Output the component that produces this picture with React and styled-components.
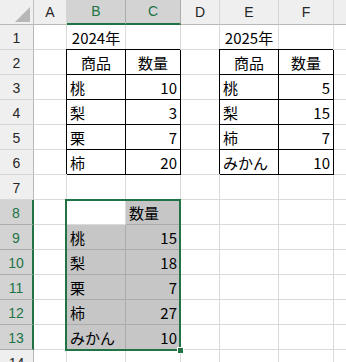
import React from "react";
import styled, { createGlobalStyle } from "styled-components";

const GlobalStyle = createGlobalStyle`
  html, body {
    margin: 0;
    padding: 0;
    background: #ffffff;
  }
  body {
    font-family: "Noto Sans CJK JP", "Noto Sans", sans-serif;
    overflow: hidden;
  }
`;

const GREEN = "#217346";

const COLUMNS = ["A", "B", "C", "D", "E", "F", "G"];
const ROW_COUNT = 14;

// cell contents keyed by address
const cells = {
  B1: { v: "2024年", align: "center" },
  B2: { v: "商品", align: "center" },
  C2: { v: "数量", align: "center" },
  B3: { v: "桃" },
  C3: { v: "10", align: "right" },
  B4: { v: "梨" },
  C4: { v: "3", align: "right" },
  B5: { v: "栗" },
  C5: { v: "7", align: "right" },
  B6: { v: "柿" },
  C6: { v: "20", align: "right" },

  E1: { v: "2025年", align: "center" },
  E2: { v: "商品", align: "center" },
  F2: { v: "数量", align: "center" },
  E3: { v: "桃" },
  F3: { v: "5", align: "right" },
  E4: { v: "梨" },
  F4: { v: "15", align: "right" },
  E5: { v: "柿" },
  F5: { v: "7", align: "right" },
  E6: { v: "みかん" },
  F6: { v: "10", align: "right" },

  C8: { v: "数量" },
  B9: { v: "桃" },
  C9: { v: "15", align: "right" },
  B10: { v: "梨" },
  C10: { v: "18", align: "right" },
  B11: { v: "栗" },
  C11: { v: "7", align: "right" },
  B12: { v: "柿" },
  C12: { v: "27", align: "right" },
  B13: { v: "みかん" },
  C13: { v: "10", align: "right" },
};

const inRange = (col, row, c1, c2, r1, r2) =>
  col >= c1 && col <= c2 && row >= r1 && row <= r2;

const isBoxed = (col, row) =>
  inRange(col, row, "B", "C", 2, 6) || inRange(col, row, "E", "F", 2, 6);

const isSelected = (col, row) => inRange(col, row, "B", "C", 8, 13);

export default function App() {
  return (
    <>
      <GlobalStyle />
      <Viewport>
        <Sheet>
          <Corner>
            <CornerMark />
          </Corner>
          {COLUMNS.map((c) => (
            <ColHead key={c} $selected={c === "B" || c === "C"}>
              {/* G is only a sliver at the window edge */}
              {c === "G" ? "" : c}
            </ColHead>
          ))}

          {Array.from({ length: ROW_COUNT }, (_, i) => i + 1).map((row) => (
            <React.Fragment key={row}>
              <RowHead $selected={row >= 8 && row <= 13}>{row}</RowHead>
              {COLUMNS.map((col) => {
                const addr = col + row;
                const data = cells[addr];
                const selected = isSelected(col, row);
                return (
                  <Cell
                    key={addr}
                    $align={data?.align || "left"}
                    $boxed={isBoxed(col, row)}
                    $selected={selected && addr !== "B8"}
                  >
                    {data?.v}
                  </Cell>
                );
              })}
            </React.Fragment>
          ))}

          <Selection />
        </Sheet>
      </Viewport>
    </>
  );
}

const Viewport = styled.div`
  width: 346px;
  height: 362px;
  overflow: hidden;
  background: #ffffff;
`;

const Sheet = styled.div`
  position: relative;
  display: grid;
  grid-template-columns: 34px 33px 59px 55px 39px 59px 55px 60px;
  grid-template-rows: repeat(15, 25px);
  width: max-content;
`;

const Corner = styled.div`
  position: relative;
  background: #efefef;
  border-right: 1px solid #c2c2c2;
  border-bottom: 1px solid #b8b8b8;
  box-sizing: border-box;
`;

const CornerMark = styled.div`
  position: absolute;
  right: 3px;
  bottom: 2px;
  width: 0;
  height: 0;
  border-left: 15px solid transparent;
  border-bottom: 15px solid #b7b7b7;
`;

const ColHead = styled.div`
  display: flex;
  align-items: center;
  justify-content: center;
  box-sizing: border-box;
  padding-bottom: 1px;
  font-family: "Liberation Sans", "Noto Sans", sans-serif;
  font-size: 14px;
  color: ${(p) => (p.$selected ? GREEN : "#262626")};
  background: ${(p) => (p.$selected ? "#d3d3d3" : "#efefef")};
  border-right: 1px solid ${(p) => (p.$selected ? "#ababab" : "#d6d6d6")};
  border-bottom: ${(p) => (p.$selected ? `2px solid ${GREEN}` : "1px solid #b8b8b8")};
`;

const RowHead = styled.div`
  display: flex;
  align-items: center;
  justify-content: center;
  box-sizing: border-box;
  padding-top: 1px;
  font-family: "Liberation Sans", "Noto Sans", sans-serif;
  font-size: 14px;
  color: ${(p) => (p.$selected ? GREEN : "#262626")};
  background: ${(p) => (p.$selected ? "#d3d3d3" : "#efefef")};
  border-bottom: 1px solid ${(p) => (p.$selected ? "#ababab" : "#d6d6d6")};
  border-right: ${(p) => (p.$selected ? `2px solid ${GREEN}` : "1px solid #b8b8b8")};
`;

const Cell = styled.div`
  display: flex;
  align-items: center;
  justify-content: ${(p) =>
    p.$align === "center" ? "center" : p.$align === "right" ? "flex-end" : "flex-start"};
  box-sizing: border-box;
  padding: 1px 3px 0 3px;
  font-size: 15px;
  line-height: 24px;
  color: #000000;
  white-space: nowrap;
  background: ${(p) => (p.$selected ? "#c6c6c6" : "#ffffff")};
  border-right: 1px solid
    ${(p) => (p.$boxed ? "#000000" : p.$selected ? "#ababab" : "#dadada")};
  border-bottom: 1px solid
    ${(p) => (p.$boxed ? "#000000" : p.$selected ? "#ababab" : "#dadada")};
  box-shadow: ${(p) => (p.$boxed ? "-1px -1px 0 0 #000000" : "none")};
`;

// active range outline (B8:C13) with the fill handle at its corner;
// absolutely placed on its grid area so it takes no cells from the flow
const Selection = styled.div`
  grid-column: 3 / 5;
  grid-row: 9 / 15;
  position: absolute;
  top: -1px;
  left: -2px;
  right: 0;
  bottom: -1px;
  box-sizing: border-box;
  border: 2px solid ${GREEN};
  pointer-events: none;

  &::after {
    content: "";
    position: absolute;
    right: -5px;
    bottom: -5px;
    width: 5px;
    height: 5px;
    background: ${GREEN};
    border: 1px solid #ffffff;
  }
`;
